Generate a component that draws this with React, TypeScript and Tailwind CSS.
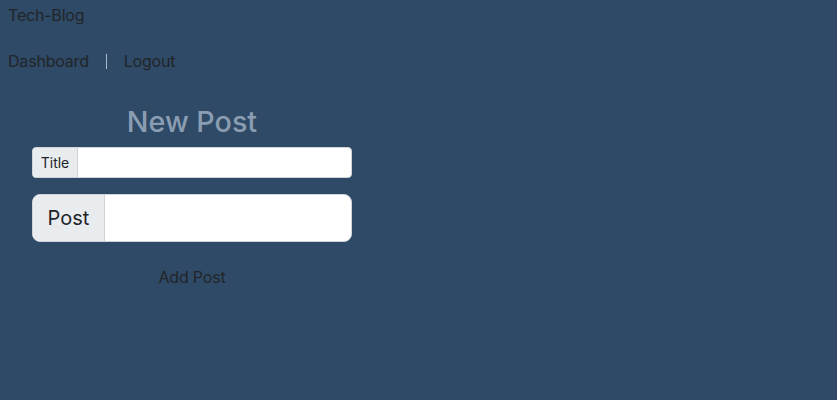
export default function App() {
  return (
    <div className="min-h-[400px] w-full bg-[#2f4a66] text-[#212529]" style={{ fontFamily: 'Inter, "Liberation Sans", sans-serif' }}>
      <div className="px-2 pt-[3px] text-base leading-6 tracking-[-0.2px]">Tech-Blog</div>
      <nav className="mt-[22px] flex items-center px-2 text-base leading-6 tracking-[-0.2px]">
        <span>Dashboard</span>
        <span className="mx-[17px] h-[15px] w-px bg-[#a9b9cb]" />
        <span>Logout</span>
      </nav>
      <div className="mt-[32px] flex w-[384px] flex-col items-center px-8">
        <h2 className="text-[28.7px] font-medium leading-[1.2] text-[#8a9db2]">New Post</h2>
        <div className="mt-[8px] flex h-[31px] w-full overflow-hidden rounded-[4px] border border-[#ced4da] bg-white">
          <span className="flex w-[45px] shrink-0 items-center justify-center border-r border-[#ced4da] bg-[#e9ecef] text-sm">Title</span>
          <input className="flex-1 outline-none" />
        </div>
        <div className="mt-4 flex h-[48px] w-full overflow-hidden rounded-[8px] border border-[#ced4da] bg-white">
          <span className="flex w-[72px] shrink-0 items-center justify-center border-r border-[#ced4da] bg-[#e9ecef] text-xl">Post</span>
          <input className="flex-1 outline-none" />
        </div>
        <button className="mt-[23px] text-base leading-6 tracking-[-0.2px]">Add Post</button>
      </div>
    </div>
  );
}
